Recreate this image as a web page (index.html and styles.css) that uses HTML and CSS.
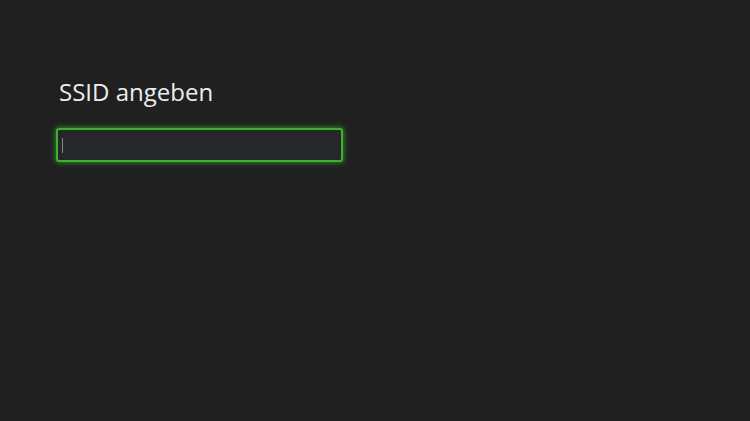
FILE: index.html
```html
<!DOCTYPE html>
<html lang="de">
<head>
<meta charset="utf-8">
<link rel="stylesheet" href="styles.css">
</head>
<body>
<main class="page">
  <h1 class="title">SSID angeben</h1>
  <div class="field"><span class="caret"></span></div>
</main>
</body>
</html>
```
FILE: styles.css
```css
html, body {
  margin: 0;
  padding: 0;
  background: #202020;
  width: 750px;
  height: 421px;
  overflow: hidden;
}
.page {
  padding: 76px 0 0 56px;
  font-family: "Open Sans", "Noto Sans", sans-serif;
}
.title {
  margin: 0 0 0 3px;
  font-size: 24px;
  font-weight: 400;
  color: #ededed;
  line-height: 32px;
}
.field {
  margin-top: 20px;
  width: 279px;
  height: 30px;
  border: 2px solid #40b030;
  border-radius: 3px;
  background: #262729;
  box-shadow: 0 0 5px 1px rgba(50, 170, 40, 0.7);
  display: flex;
  align-items: center;
  padding-left: 4px;
}
.caret {
  width: 1px;
  height: 15px;
  background: #8a8a8a;
}
```
